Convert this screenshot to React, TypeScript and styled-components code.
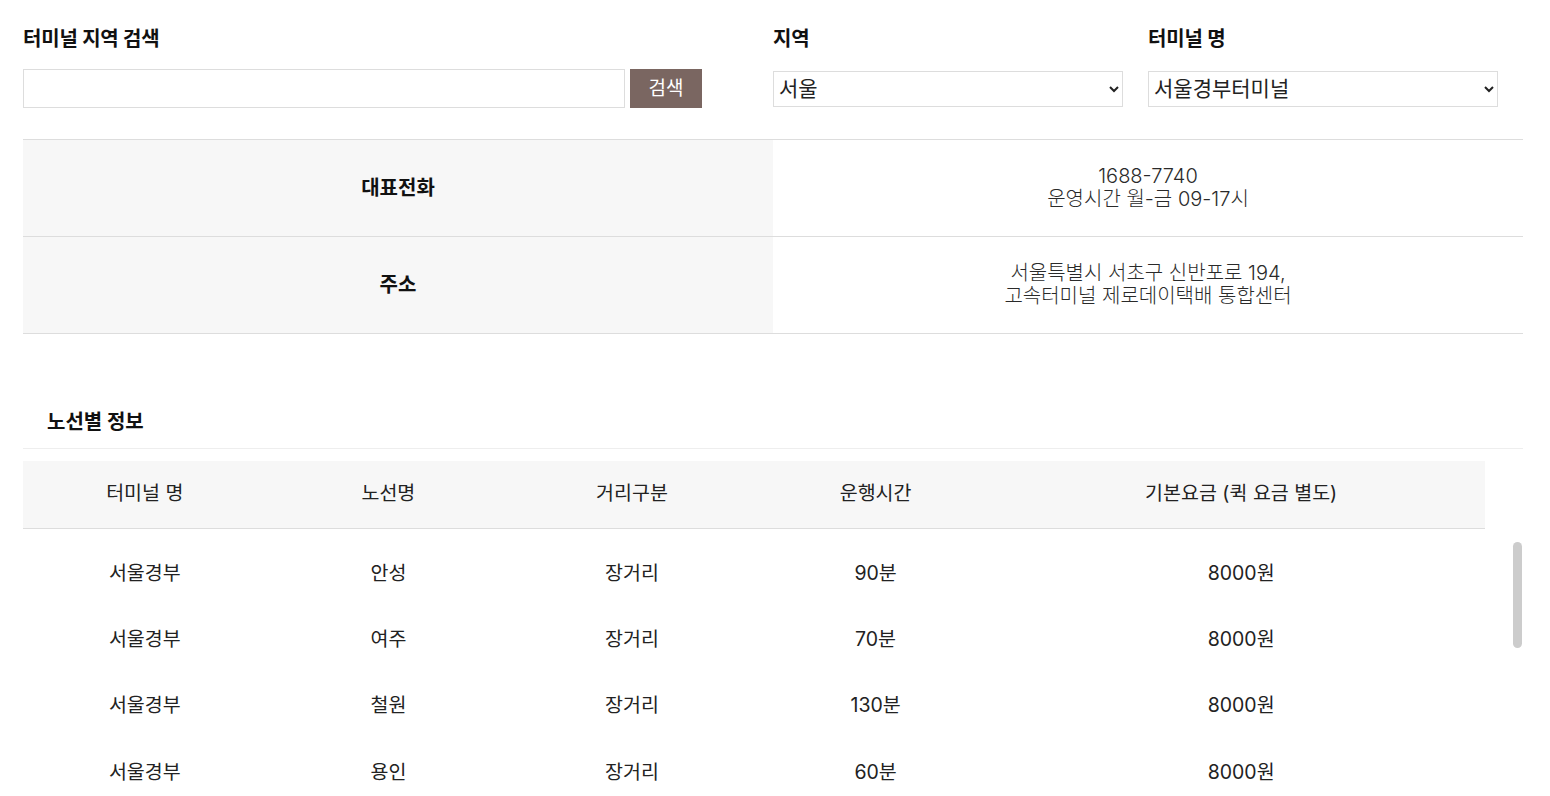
import React from "react";
import styled, { createGlobalStyle } from "styled-components";

const GlobalStyle = createGlobalStyle`
  html, body {
    margin: 0;
    padding: 0;
    background: #fff;
    overflow: hidden;
  }
  body {
    font-family: Inter, "Noto Sans CJK KR", sans-serif;
    color: #222;
  }
  * { box-sizing: border-box; }
`;

const Page = styled.div`
  width: 1546px;
  padding: 26px 23px 0 23px;
`;

const SearchBar = styled.div`
  display: grid;
  grid-template-columns: 750px 375px 375px;
  width: 1500px;
`;

const Field = styled.div`
  display: flex;
  flex-direction: column;
`;

const Label = styled.div`
  font-size: 20px;
  font-weight: 700;
  line-height: 26px;
  color: #111;
  margin-bottom: 17px;
  letter-spacing: -0.2px;
`;

const ControlRow = styled.div`
  display: flex;
  align-items: center;
  gap: 5px;
  height: 39px;
`;

const TextInput = styled.input`
  width: 602px;
  height: 39px;
  border: 1px solid #ddd;
  padding: 0 8px;
  font-size: 19px;
  font-family: inherit;
  outline: none;
`;

const SearchButton = styled.button`
  width: 72px;
  height: 39px;
  border: none;
  background: #7a6661;
  color: #fff;
  font-family: inherit;
  font-size: 19px;
  padding: 0 0 4px 0;
  cursor: pointer;
`;

const Select = styled.select`
  width: 350px;
  height: 36px;
  border: 1px solid #ddd;
  border-radius: 0;
  background: #fff;
  color: #222;
  font-family: inherit;
  font-size: 21px;
  padding: 0 1px;
  outline: none;
`;

const InfoTable = styled.div`
  margin-top: 31px;
  width: 1500px;
  border-top: 1px solid #ddd;
`;

const InfoRow = styled.div`
  display: grid;
  grid-template-columns: 750px 750px;
  height: 97px;
  border-bottom: 1px solid #ddd;
`;

const InfoHead = styled.div`
  background: #f7f7f7;
  display: flex;
  align-items: center;
  justify-content: center;
  font-size: 20px;
  font-weight: 700;
  color: #111;
  padding-bottom: 4px;
`;

const InfoValue = styled.div`
  display: flex;
  flex-direction: column;
  align-items: center;
  justify-content: center;
  text-align: center;
  font-size: 20px;
  font-weight: 300;
  line-height: 23px;
  color: #2a2a2a;
`;

const SectionTitle = styled.div`
  margin-top: 75px;
  width: 1500px;
  padding: 0 24px 13px 24px;
  font-size: 20px;
  font-weight: 700;
  line-height: 26px;
  color: #111;
  border-bottom: 1px solid #eee;
`;

const Columns = "243.6px 243.6px 243.6px 243.6px 487.6px";

const HeadRow = styled.div`
  margin-top: 12px;
  width: 1462px;
  height: 68px;
  display: grid;
  grid-template-columns: ${Columns};
  align-items: center;
  background: #f7f7f7;
  border-bottom: 1px solid #ddd;
`;

const HeadCell = styled.div`
  text-align: center;
  font-size: 19.5px;
  color: #222;
  padding-bottom: 6px;
`;

const BodyFrame = styled.div`
  position: relative;
  width: 1500px;
  height: 268px;
`;

const ScrollBody = styled.div`
  width: 100%;
  height: 100%;
  overflow-y: auto;
  padding: 9px 0 39px 0;
  scrollbar-width: none;
  &::-webkit-scrollbar {
    display: none;
  }
`;

const ScrollThumb = styled.div`
  position: absolute;
  top: 13px;
  right: 1px;
  width: 9px;
  height: 106px;
  border-radius: 5px;
  background: #cccccc;
`;

const BodyRow = styled.div`
  width: 1462px;
  height: 66.3px;
  display: grid;
  grid-template-columns: ${Columns};
  align-items: center;
`;

const BodyCell = styled.div`
  text-align: center;
  font-size: 19.5px;
  color: #222;
`;

const routes = [
  { dest: "안성", time: "90분" },
  { dest: "여주", time: "70분" },
  { dest: "철원", time: "130분" },
  { dest: "용인", time: "60분" },
  { dest: "이천", time: "80분" },
  { dest: "원주", time: "120분" },
  { dest: "춘천", time: "110분" },
  { dest: "청주", time: "120분" },
  { dest: "평택", time: "80분" },
];

export default function App() {
  return (
    <>
      <GlobalStyle />
      <Page>
        <SearchBar>
          <Field>
            <Label>터미널 지역 검색</Label>
            <ControlRow>
              <TextInput type="text" />
              <SearchButton>검색</SearchButton>
            </ControlRow>
          </Field>
          <Field>
            <Label>지역</Label>
            <ControlRow>
              <Select defaultValue="서울">
                <option value="서울">서울</option>
                <option value="경기">경기</option>
                <option value="강원">강원</option>
              </Select>
            </ControlRow>
          </Field>
          <Field>
            <Label>터미널 명</Label>
            <ControlRow>
              <Select defaultValue="서울경부터미널">
                <option value="서울경부터미널">서울경부터미널</option>
                <option value="동서울터미널">동서울터미널</option>
              </Select>
            </ControlRow>
          </Field>
        </SearchBar>

        <InfoTable>
          <InfoRow>
            <InfoHead>대표전화</InfoHead>
            <InfoValue>
              <span>1688-7740</span>
              <span>운영시간 월-금 09-17시</span>
            </InfoValue>
          </InfoRow>
          <InfoRow>
            <InfoHead>주소</InfoHead>
            <InfoValue>
              <span>서울특별시 서초구 신반포로 194,</span>
              <span>고속터미널 제로데이택배 통합센터</span>
            </InfoValue>
          </InfoRow>
        </InfoTable>

        <SectionTitle>노선별 정보</SectionTitle>

        <HeadRow>
          <HeadCell>터미널 명</HeadCell>
          <HeadCell>노선명</HeadCell>
          <HeadCell>거리구분</HeadCell>
          <HeadCell>운행시간</HeadCell>
          <HeadCell>기본요금 (퀵 요금 별도)</HeadCell>
        </HeadRow>

        <BodyFrame>
          <ScrollBody>
            {routes.map((r, i) => (
              <BodyRow key={i}>
                <BodyCell>서울경부</BodyCell>
                <BodyCell>{r.dest}</BodyCell>
                <BodyCell>장거리</BodyCell>
                <BodyCell>{r.time}</BodyCell>
                <BodyCell>8000원</BodyCell>
              </BodyRow>
            ))}
          </ScrollBody>
          <ScrollThumb />
        </BodyFrame>
      </Page>
    </>
  );
}
